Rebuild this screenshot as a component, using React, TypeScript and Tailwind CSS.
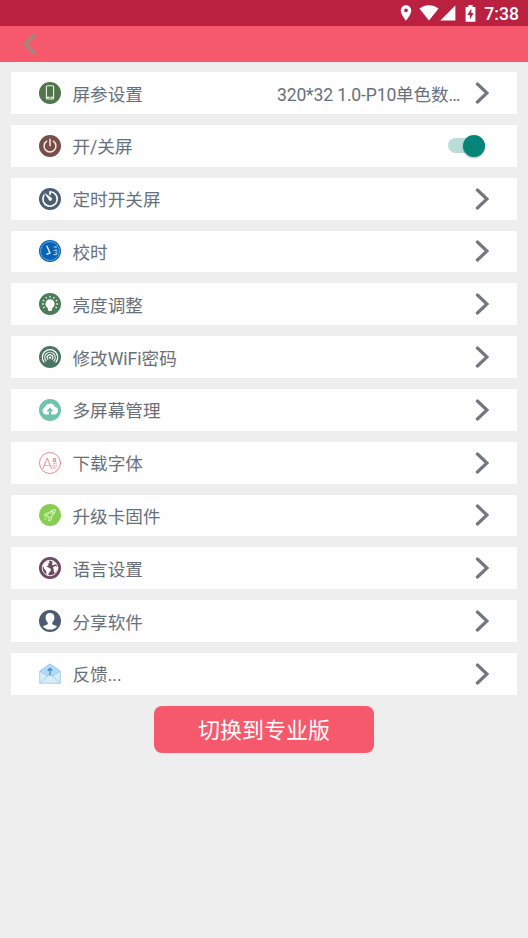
import type { ReactNode } from "react";

type SettingItem = {
  title: string;
  icon: ReactNode;
  value?: string;
  toggle?: boolean;
};

const items: SettingItem[] = [
  { title: "屏参设置", icon: <PhoneIcon />, value: "320*32 1.0-P10单色数…" },
  { title: "开/关屏", icon: <PowerIcon />, toggle: true },
  { title: "定时开关屏", icon: <TimerIcon /> },
  { title: "校时", icon: <ClockIcon /> },
  { title: "亮度调整", icon: <BulbIcon /> },
  { title: "修改WiFi密码", icon: <WifiIcon /> },
  { title: "多屏幕管理", icon: <CloudIcon /> },
  { title: "下载字体", icon: <FontIcon /> },
  { title: "升级卡固件", icon: <RocketIcon /> },
  { title: "语言设置", icon: <GlobeIcon /> },
  { title: "分享软件", icon: <UserIcon /> },
  { title: "反馈...", icon: <MailIcon /> }
];

export default function App() {
  return (
    <div className="min-h-screen bg-[#eeeeee] font-['Roboto','Noto_Sans_CJK_SC',sans-serif]">
      <StatusBar />
      <header className="flex h-[35.5px] items-center bg-[#f6596c] pl-[22px]">
        <button type="button" aria-label="返回">
          <svg viewBox="0 0 16 24" className="block h-6 w-4" fill="none" stroke="#a5857f" strokeWidth="3.5">
            <path d="M13.4 2.3 3.2 12l10.2 9.7" />
          </svg>
        </button>
      </header>

      <main className="flex flex-col items-center px-[11px] pt-[10.7px]">
        <ul className="flex w-full flex-col gap-[11px]">
          {items.map((item) => (
            <SettingRow key={item.title} item={item} />
          ))}
        </ul>
        <button type="button" className="mt-[11px] h-[47px] w-[220px] rounded-[8px] bg-[#f6596c] pt-[3px] text-[22px] leading-none text-white">
          切换到专业版
        </button>
      </main>
    </div>
  );
}

function SettingRow({ item }: { item: SettingItem }) {
  return (
    <li className="flex h-[41.8px] items-center bg-[#fefefe] pr-7 pl-7 text-[17.6px] leading-[26px] text-[#68707b]">
      <span className="h-[22px] w-[22px] shrink-0">{item.icon}</span>
      <span className="ml-[11.5px] grow pt-[3px] whitespace-nowrap">{item.title}</span>
      {item.value && <span className="mr-[15px] pt-[3px] tracking-[-0.17px] whitespace-nowrap">{item.value}</span>}
      {item.toggle ? <Toggle /> : <Chevron />}
    </li>
  );
}

function Toggle() {
  return (
    <span role="switch" aria-checked="true" className="mr-[4px] flex h-[15px] w-[37px] items-center justify-end rounded-full bg-[#b9ddd9]">
      <span className="h-[22px] w-[22px] rounded-full bg-[#048577] shadow-[0_1px_2px_rgba(0,0,0,0.3)]" />
    </span>
  );
}

function Chevron() {
  return (
    <svg viewBox="0 0 14 22" className="h-[22px] w-[14px] shrink-0" fill="none" stroke="#737780" strokeWidth="3.2" strokeLinecap="round">
      <path d="M2.4 2 12 11 2.4 20" />
    </svg>
  );
}

function StatusBar() {
  return (
    <div className="flex h-[26px] items-center justify-end bg-[#ba2040] pr-[9px] text-white">
      <svg viewBox="0 0 12 16" className="mr-[7px] h-4 w-3" fill="currentColor">
        <path fillRule="evenodd" d="M6 .2A5.2 5.2 0 0 0 .7 5.4C.7 9.2 6 15.6 6 15.6s5.3-6.4 5.3-10.2A5.2 5.2 0 0 0 6 .2Zm0 3.2a1.9 1.9 0 1 1 0 3.8 1.9 1.9 0 0 1 0-3.8Z" />
      </svg>
      <svg viewBox="0 0 20 16" className="mr-[1px] h-4 w-5" fill="currentColor">
        <path d="M.4 3.6C6-.9 14-.9 19.6 3.6L10 15.6Z" />
      </svg>
      <svg viewBox="0 0 16 16" className="mr-[9px] h-4 w-4" fill="currentColor">
        <path d="M15.4.4v15.2H.4Z" />
      </svg>
      <svg viewBox="0 0 11 17" className="mr-[8px] h-[17px] w-[11px]" fill="currentColor">
        <path fillRule="evenodd" d="M3.4 0h4.2v2h2.8v14.8H.6V2h2.8ZM6.3 3.6 2.4 10h2.5v4.4L8.6 8H6.3Z" />
      </svg>
      <span className="pt-px text-[17.6px] leading-[26px] font-medium">7:38</span>
    </div>
  );
}

// round 22px badge shared by most of the row icons
function Badge({ color, children }: { color: string; children: ReactNode }) {
  return (
    <svg viewBox="0 0 22 22" className="block h-[22px] w-[22px]" fill="none" stroke="#fff" strokeLinecap="round" strokeLinejoin="round">
      <circle cx="11" cy="11" r="11" fill={color} stroke="none" />
      {children}
    </svg>
  );
}

function PhoneIcon() {
  return (
    <Badge color="#4f754c">
      <rect x="7.4" y="3.8" width="7.2" height="13.2" rx="1" stroke="#e9f5e6" strokeWidth="1.1" />
      <path d="M7.7 15.5h6.6" stroke="#e9f5e6" strokeWidth="1.6" />
      <circle cx="11" cy="15.7" r=".7" fill="#4f754c" stroke="none" />
    </Badge>
  );
}

function PowerIcon() {
  return (
    <Badge color="#774e49">
      <path d="M7.7 6.2a5.9 5.9 0 1 0 6.6 0M11 4.2v6.6" stroke="#ffe9e4" strokeWidth="1.5" />
    </Badge>
  );
}

function TimerIcon() {
  return (
    <Badge color="#4e5e73">
      <path d="M11 3.8a7.2 7.2 0 1 1-6 3.3M11 3.8v2.6" strokeWidth="1.6" />
      <path d="m5.2 4.6 7.2 5.2a1.7 1.7 0 1 1-2.4 2.4Z" fill="#fff" stroke="none" />
    </Badge>
  );
}

function ClockIcon() {
  return (
    <Badge color="#0862b4">
      <circle cx="11" cy="11" r="9.4" stroke="#86bceb" strokeWidth=".8" strokeDasharray="2.4 1" />
      <path d="m8 6.2 3 6.8M11 13l-3 1.2" stroke="#dff1ff" strokeWidth="1.4" />
      <path d="M15.2 7h2.4M15 10.6l2.4-.8.6 1.4M14.8 14.7h2.6l.6-1.6-1.4-.4" stroke="#bfe1fb" strokeWidth="1" />
    </Badge>
  );
}

function BulbIcon() {
  return (
    <Badge color="#4d7d56">
      <path d="M11 6.3a4.6 4.6 0 0 0-2.8 8.2c.5.4.7 1 .8 1.9l.6 1.6h2.8l.6-1.6c.1-.9.3-1.5.8-1.9A4.6 4.6 0 0 0 11 6.3Z" fill="#fff" stroke="none" />
      <path d="M11 3.4v.5M7 4.5l.3.5M15 4.5l-.3.5M4.3 7.4l.5.3M17.7 7.4l-.5.3M3.6 11h.6M17.8 11h.6M4.6 14.6l.5-.3M17.4 14.6l-.5-.3" strokeWidth="1.3" />
    </Badge>
  );
}

function WifiIcon() {
  return (
    <Badge color="#4d7565">
      <path d="M5 16.2a7.7 7.7 0 1 1 12 0M7 14.8a5.2 5.2 0 1 1 8 0M8.8 13.2a2.8 2.8 0 1 1 4.4 0" strokeWidth="1.15" />
      <circle cx="11" cy="11.6" r="1.2" fill="#fff" stroke="none" />
      <path d="m11 12.4-3.8 6.8h7.6Z" fill="#4d7565" stroke="none" />
    </Badge>
  );
}

function CloudIcon() {
  return (
    <Badge color="#72c2ad">
      <path d="M6.3 15.4a3.7 3.7 0 0 1-.4-7.1 5.3 5.3 0 0 1 9.9-.5 3.9 3.9 0 0 1 .2 7.6Z" fill="#fff" stroke="none" />
      <path d="M11 8.5 7.5 12.3h2.3v4h2.4v-4h2.3Z" fill="#72c2ad" stroke="none" />
    </Badge>
  );
}

function FontIcon() {
  return (
    <svg viewBox="0 0 22 22" className="block h-[22px] w-[22px]" fill="none" stroke="#df7f97" strokeLinecap="round">
      <circle cx="11" cy="11" r="10.5" strokeWidth=".9" />
      <text x="3" y="16.6" fill="#df7f97" stroke="none" className="font-['Lato',sans-serif] text-[16px] font-light">A</text>
      <text x="13.4" y="9.7" fill="#df7f97" stroke="none" className="font-['Roboto',sans-serif] text-[7px] font-bold">a</text>
      <path d="M14.2 11.8h3.4M13.6 14h2M17 13.8h1M14.5 16h2.8" strokeWidth=".7" />
    </svg>
  );
}

function RocketIcon() {
  return (
    <Badge color="#88cc54">
      <g stroke="#e8fbd6" strokeWidth=".9">
        <path d="M8.5 11.2c1.5-3.6 4-5.5 7.8-5.7-.1 3.8-2.1 6.4-5.8 7.9Z" />
        <path d="m9.3 9-2.6.3-1.6 2.5 3.2-.1M12.7 12.6l-.3 2.8-2.5 1.7.2-3.4M7.8 13.3l-2.2 2.6" />
        <circle cx="13" cy="8.6" r="1.3" />
      </g>
    </Badge>
  );
}

function GlobeIcon() {
  return (
    <Badge color="#6c4965">
      <circle cx="11" cy="11" r="7.8" strokeWidth=".9" />
      <path d="M3.8 8.2 6 5.2 9.2 3.8l1.6 1.4-1.6 1.5.4 1.5-2.4 1.4 2 .6 2.9 2-.8 2.3-1.5 1.3-.5 2.5-1.6-.6-.6-3.8-2-2.3Z" fill="#fff" stroke="none" />
      <path d="m12.4 3.8 3 1 2.5 2.8-2.6-.2-1.3 1.2-1.2-1.6 1-1.2Zm1.4 6.4 2.6-1.1 2.2.9-.5 3.2-2.2 2.8-1-1-.2-2.4Z" fill="#fff" stroke="none" />
    </Badge>
  );
}

function UserIcon() {
  return (
    <Badge color="#4c5d72">
      <path d="M11 3c-2.9 0-4.5 2-4.4 4.8.1 2.1.9 3.5 2.1 4.5v1.6c-.7 1-3.4 1.3-4.8 2.6A8.8 8.8 0 0 0 11 19.6a8.8 8.8 0 0 0 7.1-3.1c-1.4-1.3-4.1-1.6-4.8-2.6v-1.6c1.2-1 2-2.4 2.1-4.5C15.500 5 13.900 3 11 3Z" fill="#fff" stroke="none" />
    </Badge>
  );
}

function MailIcon() {
  return (
    <svg viewBox="0 0 22 22" className="block h-[22px] w-[22px]" fill="none" stroke="#8fc3e8" strokeWidth=".7" strokeLinejoin="round">
      <path d="M.7 8.3 11 1l10.300 7.300v12H.7Z" fill="#d6edfd" />
      <path d="M.9 8.300 11 1l10.100 7.300L13.500 13 11 11.700 8.500 13Z" fill="#b3dbf9" />
      <path d="M.7 20.300 8.500 13 11 11.700 13.500 13l7.800 7.300" />
      <path d="M11 12V5.400M8.700 7.700 11 5.200l2.300 2.500" stroke="#448fc8" strokeWidth="1.300" />
    </svg>
  );
}
